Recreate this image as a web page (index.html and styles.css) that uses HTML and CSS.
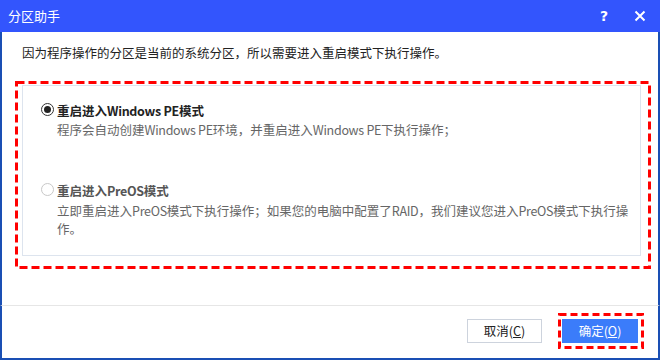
FILE: index.html
```html
<!DOCTYPE html>
<html lang="zh-CN">
<head>
<meta charset="utf-8">
<title>分区助手</title>
<link rel="stylesheet" href="styles.css">
</head>
<body>
<div class="win">
  <div class="titlebar">
    <span class="title">分区助手</span>
    <span class="tools">
      <span class="help">?</span>
      <svg class="close" width="12" height="12" viewBox="0 0 12 12"><path d="M1.5 1.5L10.5 10.5M10.5 1.5L1.5 10.5" stroke="#fff" stroke-width="2" fill="none"/></svg>
    </span>
  </div>
  <div class="content">
    <p class="intro">因为程序操作的分区是当前的系统分区，所以需要进入重启模式下执行操作。</p>
    <div class="panel-wrap">
      <div class="panel">
        <div class="option">
          <div class="opt-label"><span class="radio checked"></span><span class="label-text">重启进入<span class="lat">Windows PE</span>模式</span></div>
          <div class="opt-desc">程序会自动创建<span class="lat">Windows PE</span>环境，并重启进入<span class="lat">Windows PE</span>下执行操作；</div>
        </div>
        <div class="option disabled">
          <div class="opt-label"><span class="radio"></span><span class="label-text">重启进入<span class="lat">PreOS</span>模式</span></div>
          <div class="opt-desc wrap2">立即重启进入<span class="lat">PreOS</span>模式下执行操作；如果您的电脑中配置了<span class="lat">RAID</span>，我们建议您进入<span class="lat">PreOS</span>模式下执行操<br>作。</div>
        </div>
      </div>
      <svg class="annot annot-panel" width="636" height="188" viewBox="0 0 636 188"><rect x="1.5" y="1.5" width="633" height="185" fill="none" stroke="#ff0000" stroke-width="3" stroke-dasharray="8 4"/></svg>
    </div>
  </div>
  <div class="footer">
    <button class="btn cancel">取消(<u>C</u>)</button>
    <div class="btn-wrap">
      <button class="btn ok">确定(<u>O</u>)</button>
      <svg class="annot annot-btn" width="86" height="36" viewBox="0 0 86 36"><rect x="1.5" y="1.5" width="83" height="33" fill="none" stroke="#ff0000" stroke-width="3" stroke-dasharray="7 4"/></svg>
    </div>
  </div>
</div>
</body>
</html>
```

FILE: styles.css
```css
* { box-sizing: border-box; }
html, body { margin: 0; padding: 0; }
body {
  width: 660px;
  height: 360px;
  background: #ffffff;
  font-family: "Noto Sans CJK SC", "Noto Sans", sans-serif;
  font-size: 12.5px;
  color: #222;
  overflow: hidden;
}
.win {
  width: 660px;
  height: 360px;
  display: flex;
  flex-direction: column;
  background: #fff;
}
.titlebar {
  height: 32px;
  flex: none;
  background: #3355fd;
  color: #fff;
  display: flex;
  align-items: center;
  justify-content: space-between;
  padding: 0 14px 0 8px;
}
.title { font-size: 13px; line-height: 20px; }
.tools { display: flex; align-items: center; gap: 26px; }
.help { font-family: "DejaVu Sans", sans-serif; font-weight: bold; font-size: 14px; line-height: 20px; }
.close { display: block; }
.content {
  flex: none;
  height: 273px;
  border-left: 2px solid #1a4fb4;
  border-right: 2px solid #1a4fb4;
  padding: 11px 0 0 20px;
}
.intro { margin: 0; line-height: 20px; color: #222; }
.panel-wrap { position: relative; margin-top: 22px; width: 619px; }
.panel {
  height: 171px;
  border: 1px solid #dde4ee;
  padding: 14px 18px 0 18px;
}
.lat { letter-spacing: -0.3px; }
.opt-label { display: flex; align-items: center; height: 20px; font-weight: bold; }
.radio {
  width: 13px;
  height: 13px;
  border-radius: 50%;
  border: 1.5px solid #333;
  margin-right: 3px;
  margin-top: -2px;
  display: flex;
  align-items: center;
  justify-content: center;
  flex: none;
}
.radio.checked::after {
  content: "";
  width: 7px;
  height: 7px;
  border-radius: 50%;
  background: #222;
}
.opt-desc { padding-left: 16px; color: #666; line-height: 18px; margin-top: 1px; }
.option.disabled { margin-top: 41px; }
.option.disabled .radio { border-color: #c8c8c8; }
.option.disabled .opt-label { color: #555; }
.option.disabled .opt-desc { margin-top: 2px; }
.opt-desc.wrap2 { white-space: nowrap; }
.annot { position: absolute; pointer-events: none; }
.annot-panel { left: -7px; top: -4px; }
.footer {
  flex: 1;
  border-top: 1px solid #e6e6e6;
  border-left: 2px solid #1a4fb4;
  border-right: 2px solid #1a4fb4;
  border-bottom: 2px solid #1a4fb4;
  display: flex;
  justify-content: flex-end;
  align-items: flex-start;
  padding: 13px 20px 0 0;
  gap: 20px;
}
.btn {
  height: 24px;
  font-family: inherit;
  font-size: 12.5px;
  line-height: 20px;
  padding: 0;
  margin: 0;
  cursor: default;
}
.cancel { width: 75px; background: #fff; border: 1px solid #cdd3dd; color: #222; }
.btn-wrap { position: relative; }
.ok { width: 76px; background: #3b7cfa; border: 1px solid #3b7cfa; color: #fff; display: block; }
.annot-btn { left: -4px; top: -6px; }
```
